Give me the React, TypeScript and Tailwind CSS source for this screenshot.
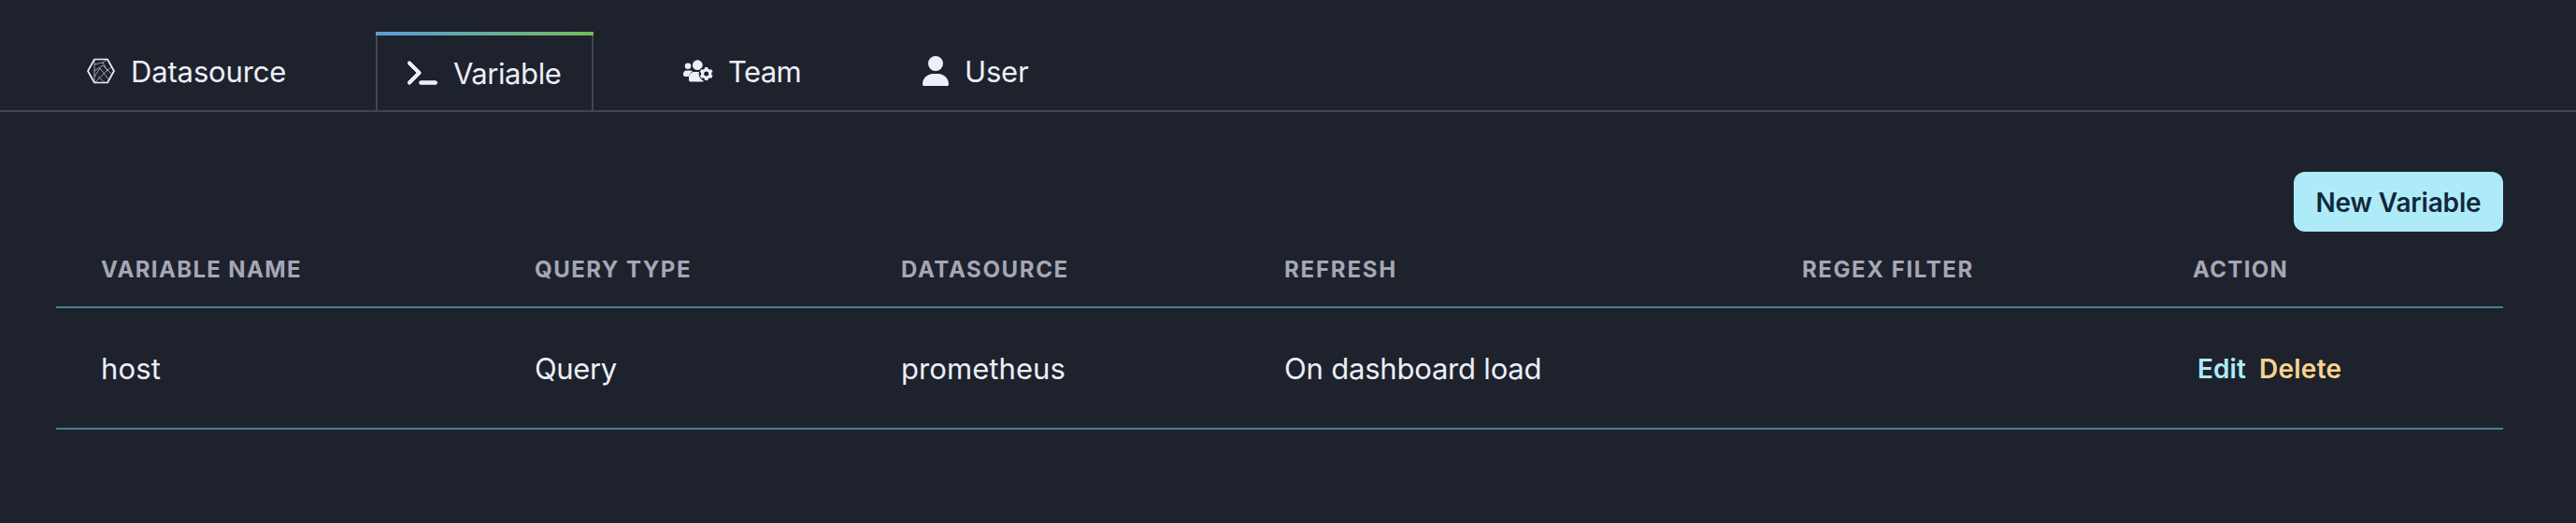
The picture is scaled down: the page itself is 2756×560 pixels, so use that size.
import React from "react";
import { FaTerminal, FaUser } from "react-icons/fa6";

function HexIcon() {
  return (
    <svg width="30" height="28" viewBox="0 0 30 28" fill="none" stroke="#eceff8" strokeLinejoin="round">
      <path d="M8 1.5H22L29 14L22 26.5H8L1 14Z" strokeWidth="1.7" />
      <path
        d="M8 1.5V26.5M8 7L17 5L22 1.5M8 14L17 8L27 18M9 26L21 14L27 9M8 20L14 11L24 24M12 20L19 26.5M17 5L22 14"
        strokeWidth="0.8"
        opacity="0.75"
      />
    </svg>
  );
}

function TeamIcon() {
  return (
    <svg width="33" height="24" viewBox="0 0 33 24" fill="#eceff8">
      <circle cx="6" cy="6.7" r="3.3" />
      <circle cx="16.3" cy="5.7" r="5.4" />
      <path d="M4.6 11.4H8.6C9.6 11.4 10.4 11.7 11 12.2C8.5 13.6 7.2 15.5 6.8 18H3.2C1.9 18 1 17.2 1 16V15C1 13 2.6 11.4 4.6 11.4Z" />
      <path d="M12.6 12.9H19C18.2 16.6 19.3 20 22.6 22.4V23.6H9C7.8 23.6 7 22.8 7 21.7V18.8C7 15.5 9.4 12.9 12.6 12.9Z" />
      <circle cx="25.7" cy="15" r="8.1" fill="#1e222d" />
      <circle cx="25.7" cy="15" r="4.1" fill="none" stroke="#eceff8" strokeWidth="3.2" />
      <path
        d="M25.7 8V10.5M25.7 19.5V22M19.64 11.5L21.8 12.75M29.6 17.25L31.76 18.5M19.64 18.5L21.8 17.25M29.6 12.75L31.76 11.5"
        stroke="#eceff8"
        strokeWidth="3.4"
      />
    </svg>
  );
}

const columns = [
  { label: "VARIABLE NAME", value: "host", head: "w-[464px] tracking-[1.36px]", cell: "w-[464px] tracking-[0.15px]" },
  { label: "QUERY TYPE", value: "Query", head: "w-[392px] tracking-[1.5px]", cell: "w-[392px] tracking-[-0.4px]" },
  { label: "DATASOURCE", value: "prometheus", head: "w-[410px] tracking-[1.63px]", cell: "w-[410px] tracking-[0.07px]" },
  { label: "REFRESH", value: "On dashboard load", head: "w-[554px] tracking-[1.8px]", cell: "w-[554px] tracking-[-0.2px]" },
  { label: "REGEX FILTER", value: "", head: "w-[418px] tracking-[1.58px]", cell: "w-[418px]" },
];

export default function App() {
  return (
    <div className="h-[560px] w-full overflow-hidden bg-[#1e222d] font-['Inter','Liberation_Sans',sans-serif] text-[#eceff8]">
      <nav className="flex h-[120px] items-end border-b-2 border-[#424650] text-[31px]">
        <div className="flex h-[84px] w-[402px] items-center gap-[17px] pl-[93px]">
          <HexIcon />
          <span className="pt-[2px] tracking-[-0.15px]">Datasource</span>
        </div>
        <div className="flex h-[84px] w-[233px] flex-col border-x-2 border-[#424650]">
          <div className="-mx-[2px] h-1 shrink-0 bg-linear-to-r from-[#5b9bd5] to-[#76bb55]" />
          <div className="flex flex-1 items-center gap-[17px] pl-[32px]">
            <FaTerminal className="h-[28px] w-[32px]" stroke="#eceff8" strokeWidth={18} />
            <span className="pt-[2px] tracking-[-0.44px]">Variable</span>
          </div>
        </div>
        <div className="flex h-[84px] w-[222px] items-center gap-[16px] pl-[95px]">
          <TeamIcon />
          <span className="pt-[2px] tracking-[-0.65px]">Team</span>
        </div>
        <div className="flex h-[84px] items-center gap-[17px] pl-[130px]">
          <FaUser className="h-[32px] w-[28px]" />
          <span className="pt-[2px] tracking-[-0.17px]">User</span>
        </div>
      </nav>
      <main className="pt-[64px] pr-[78px] pl-[60px]">
        <div className="flex justify-end">
          <button className="h-16 w-[224px] rounded-xl bg-[#aeebf9] pt-[2px] text-[28px] font-semibold tracking-[-0.17px] text-[#12283a]">
            New Variable
          </button>
        </div>
        <div className="flex h-[82px] items-start border-b-2 border-[#47808f] pt-[24px] pl-12 text-[24px] leading-[34px] font-bold text-[#a5a7b5]">
          {columns.map((c) => (
            <div key={c.label} className={`${c.head} whitespace-nowrap`}>{c.label}</div>
          ))}
          <div className="tracking-[1.32px]">ACTION</div>
        </div>
        <div className="flex h-[130px] items-center border-b-2 border-[#47808f] pt-[2px] pl-12 text-[31px]">
          {columns.map((c) => (
            <div key={c.label} className={`${c.cell} whitespace-nowrap`}>{c.value}</div>
          ))}
          <div className="flex gap-[14px] pl-[5px] text-[28px] font-semibold">
            <span className="tracking-[0.08px] text-[#aeebf9]">Edit</span>
            <span className="tracking-[0.25px] text-[#fbd38d]">Delete</span>
          </div>
        </div>
      </main>
    </div>
  );
}
